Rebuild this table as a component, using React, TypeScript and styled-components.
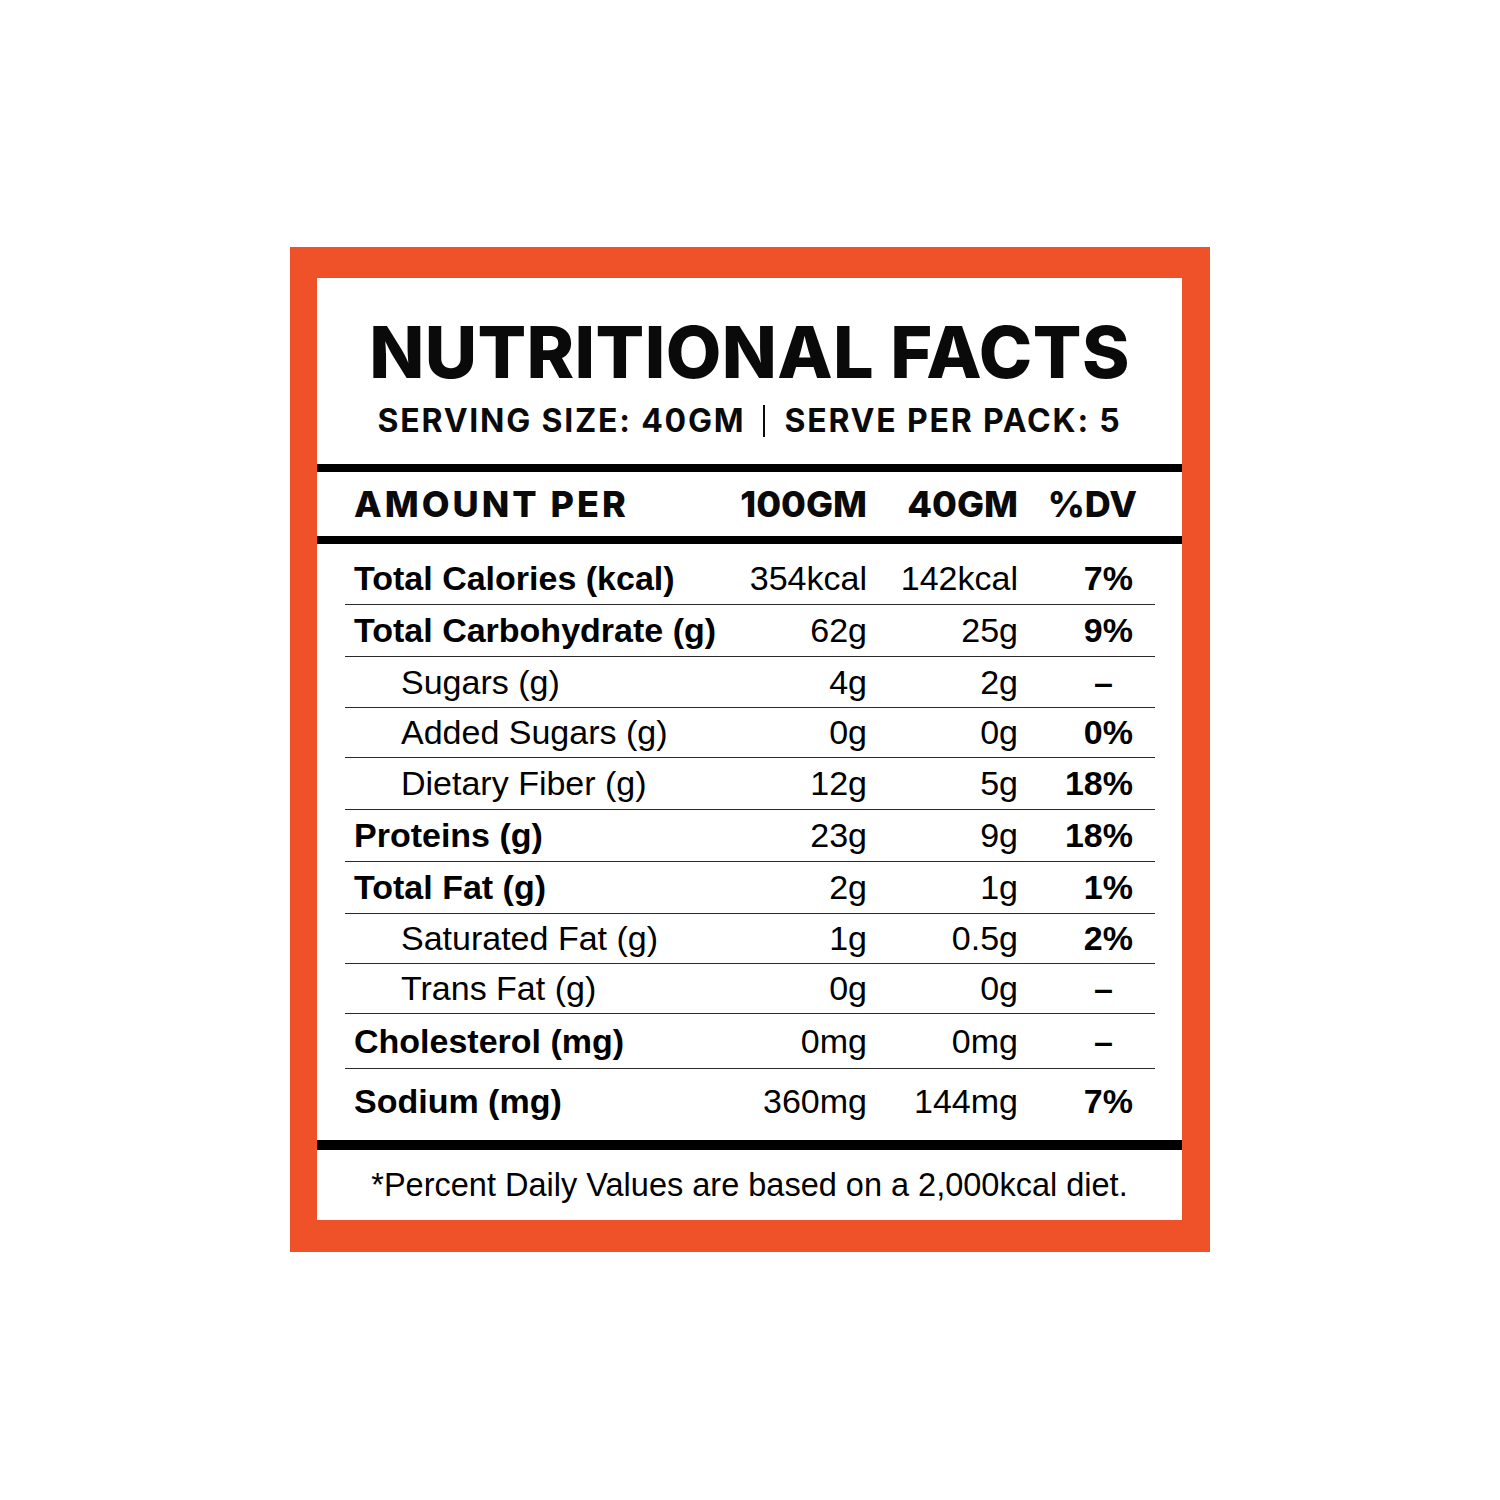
import styled, { createGlobalStyle } from 'styled-components';

const GlobalStyle = createGlobalStyle`
  html, body {
    margin: 0;
    padding: 0;
    background: #ffffff;
  }
`;

type Row = {
  label: string;
  per100: string;
  perServe: string;
  dv: string;
  bold?: boolean;
  indent?: boolean;
  height: number;
  offset?: number;
};

const rows: Row[] = [
  { label: 'Total Calories (kcal)', per100: '354kcal', perServe: '142kcal', dv: '7%', bold: true, height: 61, offset: 9 },
  { label: 'Total Carbohydrate (g)', per100: '62g', perServe: '25g', dv: '9%', bold: true, height: 52 },
  { label: 'Sugars (g)', per100: '4g', perServe: '2g', dv: '–', indent: true, height: 51 },
  { label: 'Added Sugars (g)', per100: '0g', perServe: '0g', dv: '0%', indent: true, height: 50 },
  { label: 'Dietary Fiber (g)', per100: '12g', perServe: '5g', dv: '18%', indent: true, height: 52 },
  { label: 'Proteins (g)', per100: '23g', perServe: '9g', dv: '18%', bold: true, height: 52 },
  { label: 'Total Fat (g)', per100: '2g', perServe: '1g', dv: '1%', bold: true, height: 52 },
  { label: 'Saturated Fat (g)', per100: '1g', perServe: '0.5g', dv: '2%', indent: true, height: 50 },
  { label: 'Trans Fat (g)', per100: '0g', perServe: '0g', dv: '–', indent: true, height: 50 },
  { label: 'Cholesterol (mg)', per100: '0mg', perServe: '0mg', dv: '–', bold: true, height: 55 },
  { label: 'Sodium (mg)', per100: '360mg', perServe: '144mg', dv: '7%', bold: true, height: 71, offset: -6 },
];

const Page = styled.div`
  width: 1500px;
  height: 1500px;
  box-sizing: border-box;
  padding: 247px 0 0 290px;
`;

const Frame = styled.div`
  width: 920px;
  box-sizing: border-box;
  border-style: solid;
  border-color: #ef5129;
  border-width: 31px 28px 32px 27px;
  background: #ffffff;
`;

const TitleBlock = styled.div`
  height: 186px;
  box-sizing: border-box;
  padding-top: 38px;
  display: flex;
  flex-direction: column;
  align-items: center;
  font-family: Inter, 'Noto Sans', sans-serif;
  color: #0a0a0a;
`;

const Title = styled.h1`
  margin: 0;
  font-size: 72px;
  line-height: 72px;
  font-weight: 800;
  letter-spacing: 0.4px;
`;

const Subtitle = styled.div`
  margin-top: 16px;
  font-size: 32px;
  line-height: 34px;
  font-weight: 700;
  letter-spacing: 1.8px;
  display: flex;
  align-items: center;
`;

const Divider = styled.span`
  display: inline-block;
  width: 2px;
  height: 32px;
  background: #0a0a0a;
  margin: 0 19px 0 18px;
`;

const HeaderRow = styled.div`
  height: 80px;
  box-sizing: border-box;
  border-top: 8px solid #000;
  border-bottom: 8px solid #000;
  display: grid;
  grid-template-columns: 1fr 150px 151px 119px;
  align-items: center;
  padding: 0 45px 0 37px;
  font-family: Inter, 'Noto Sans', sans-serif;
  font-weight: 800;
  font-size: 36px;
  color: #0a0a0a;
`;

const HeadCell = styled.div<{ $right?: boolean; $wide?: boolean }>`
  text-align: ${(p) => (p.$right ? 'right' : 'left')};
  letter-spacing: ${(p) => (p.$wide ? '3px' : '0')};
  white-space: nowrap;
`;

const Table = styled.div`
  padding: 0 27px 0 28px;
  border-bottom: 10px solid #000;
`;

const DataRow = styled.div<{ $last?: boolean }>`
  display: grid;
  grid-template-columns: 1fr 150px 151px 115px;
  align-items: center;
  box-sizing: border-box;
  padding: 0 22px 0 9px;
  border-bottom: ${(p) => (p.$last ? 'none' : '1.5px solid #2a2a2a')};
  font-family: 'Liberation Sans', Arial, sans-serif;
  font-size: 34px;
  color: #000;
`;

const Label = styled.div<{ $bold?: boolean; $indent?: boolean }>`
  font-weight: ${(p) => (p.$bold ? 700 : 400)};
  padding-left: ${(p) => (p.$indent ? '47px' : '0')};
  white-space: nowrap;
`;

const Value = styled.div`
  text-align: right;
  white-space: nowrap;
`;

const Percent = styled.div<{ $dash?: boolean }>`
  text-align: right;
  font-weight: 700;
  padding-right: ${(p) => (p.$dash ? '20px' : '0')};
`;

const Footer = styled.div`
  height: 70px;
  display: flex;
  align-items: center;
  justify-content: center;
  font-family: 'Liberation Sans', Arial, sans-serif;
  font-size: 32.5px;
  color: #000;
`;

export default function App() {
  return (
    <>
      <GlobalStyle />
      <Page>
        <Frame>
          <TitleBlock>
            <Title>NUTRITIONAL FACTS</Title>
            <Subtitle>
              SERVING SIZE: 40GM
              <Divider />
              SERVE PER PACK: 5
            </Subtitle>
          </TitleBlock>
          <HeaderRow>
            <HeadCell $wide>AMOUNT PER</HeadCell>
            <HeadCell $right>100GM</HeadCell>
            <HeadCell $right>40GM</HeadCell>
            <HeadCell $right>%DV</HeadCell>
          </HeaderRow>
          <Table>
            {rows.map((row, i) => (
              <DataRow
                key={row.label}
                $last={i === rows.length - 1}
                style={{ height: row.height, paddingTop: Math.max(row.offset ?? 0, 0), paddingBottom: Math.max(-(row.offset ?? 0), 0) }}
              >
                <Label $bold={row.bold} $indent={row.indent}>{row.label}</Label>
                <Value>{row.per100}</Value>
                <Value>{row.perServe}</Value>
                <Percent $dash={row.dv === '–'}>{row.dv}</Percent>
              </DataRow>
            ))}
          </Table>
          <Footer>*Percent Daily Values are based on a 2,000kcal diet.</Footer>
        </Frame>
      </Page>
    </>
  );
}
